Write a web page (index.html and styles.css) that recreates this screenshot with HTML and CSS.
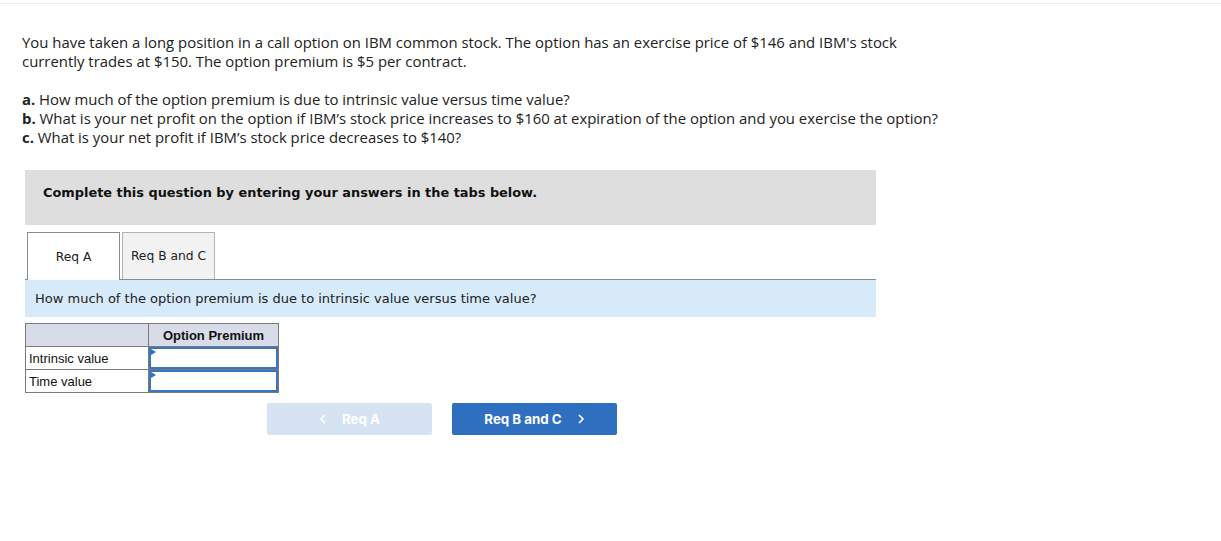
FILE: index.html
```html
<!DOCTYPE html>
<html>
<head>
<meta charset="utf-8">
<link rel="stylesheet" href="styles.css">
</head>
<body>
<div class="topline"></div>
<div class="content">
  <p class="intro">You have taken a long position in a call option on IBM common stock. The option has an exercise price of $146 and IBM's stock currently trades at $150. The option premium is $5 per contract.</p>
  <p class="questions"><b>a.</b> How much of the option premium is due to intrinsic value versus time value?<br><b>b.</b> What is your net profit on the option if IBM’s stock price increases to $160 at expiration of the option and you exercise the option?<br><b>c.</b> What is your net profit if IBM’s stock price decreases to $140?</p>

  <div class="panel">
    <div class="instr">Complete this question by entering your answers in the tabs below.</div>
    <div class="tabs">
      <div class="tab active">Req A</div>
      <div class="tab">Req B and C</div>
    </div>
    <div class="prompt">How much of the option premium is due to intrinsic value versus time value?</div>
    <table class="grid">
      <tr class="head"><th class="c1"></th><th class="c2">Option Premium</th></tr>
      <tr><td class="c1">Intrinsic value</td><td class="c2 inp"><div class="box"><span class="tri"></span></div></td></tr>
      <tr><td class="c1">Time value</td><td class="c2 inp"><div class="box"><span class="tri"></span></div></td></tr>
    </table>
    <div class="nav">
      <div class="btn prev"><svg width="8" height="10" viewBox="0 0 8 10"><path d="M6 1 L2 5 L6 9" fill="none" stroke="currentColor" stroke-width="1.6"/></svg><span>Req A</span></div>
      <div class="btn next"><span>Req B and C</span><svg width="8" height="10" viewBox="0 0 8 10"><path d="M2 1 L6 5 L2 9" fill="none" stroke="currentColor" stroke-width="1.6"/></svg></div>
    </div>
  </div>
</div>
</body>
</html>
```
FILE: styles.css
```css
* { box-sizing: border-box; }
body { margin: 0; background: #fff; color: #222; }
.topline { height: 4px; border-bottom: 1px solid #ececec; }
.content { padding-left: 22px; }
.intro, .questions {
  font-family: "Open Sans", Lato, sans-serif;
  font-size: 14.9px;
  line-height: 19px;
  color: #222;
  margin: 0;
  width: 960px;
}
.intro { margin-top: 29px; width: 900px; }
.questions { margin-top: 19px; }
.questions b { font-weight: 700; }
.panel { margin-left: 3px; margin-top: 23px; width: 851px; }
.instr {
  background: #dedede;
  height: 55px;
  padding: 15px 0 0 18px;
  font-family: Verdana, "DejaVu Sans", sans-serif;
  font-weight: bold;
  font-size: 12.9px;
  line-height: 16px;
  color: #111;
}
.tabs {
  display: flex;
  gap: 2px;
  margin-top: 7px;
  padding-left: 2px;
  border-bottom: 1px solid #8c8c8c;
}
.tab {
  width: 93px;
  height: 47px;
  border: 1px solid #b3b3b3;
  border-bottom: none;
  background: #f2f2f2;
  font-family: Verdana, "DejaVu Sans", sans-serif;
  font-size: 12.3px;
  color: #222;
  display: flex;
  align-items: center;
  justify-content: center;
  margin-bottom: -1px;
}
.tab.active { background: #fff; border-color: #8c8c8c; height: 48px; }
.prompt {
  background: #d7eaf9;
  height: 37px;
  padding-left: 10px;
  display: flex;
  align-items: center;
  font-family: Verdana, "DejaVu Sans", sans-serif;
  font-size: 13px;
  color: #222;
}
.grid {
  margin-top: 6px;
  border-collapse: collapse;
  font-family: "Liberation Sans", Arial, sans-serif;
  font-size: 13px;
  color: #111;
}
.grid td, .grid th { border: 1px solid #7a7a7a; padding: 0; }
.grid .c1 { width: 123px; }
.grid .c2 { width: 130px; }
.grid .head th { background: #d8dce8; height: 23px; font-weight: bold; text-align: center; }
.grid td { height: 22px; }
.grid td.c1 { padding-left: 3px; }
.box { height: 22px; border: 2px solid #3a74c4; background: #fff; position: relative; }
.tri {
  position: absolute; left: 0; top: 0;
  width: 0; height: 0;
  border-top: 3px solid transparent;
  border-bottom: 3px solid transparent;
  border-left: 5px solid #2f6fc0;
}
.nav { display: flex; gap: 20px; margin-top: 10px; margin-left: 242px; }
.btn {
  width: 165px; height: 32px;
  border-radius: 2px;
  display: flex; align-items: center; justify-content: center;
  gap: 15px;
  font-family: Inter, Roboto, sans-serif;
  font-weight: 700;
  font-size: 13.3px;
  color: #fff;
}
.btn.prev { background: #d6e3f3; color: #fff; }
.btn.next { background: #2f6fc0; }
```
